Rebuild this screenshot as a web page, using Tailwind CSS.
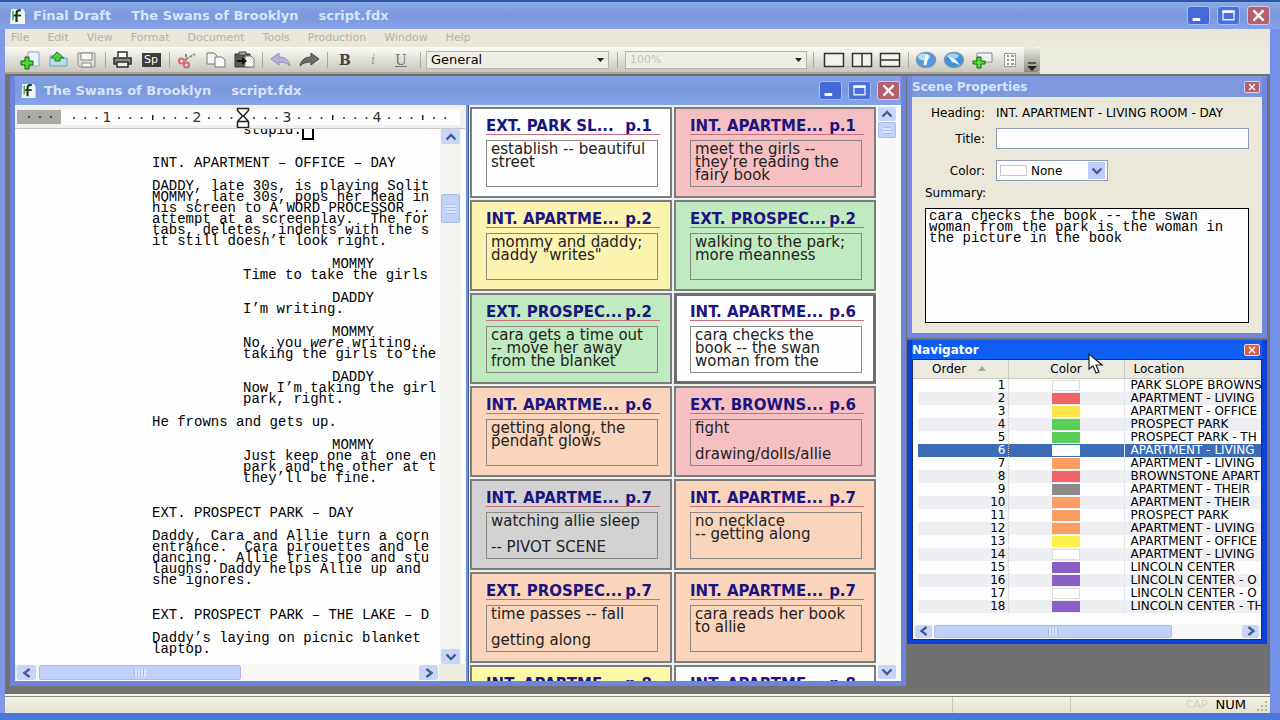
<!DOCTYPE html>
<html lang="en">
<head>
<meta charset="utf-8">
<title>Final Draft - The Swans of Brooklyn - script.fdx</title>
<script src="https://cdn.jsdelivr.net/npm/@tailwindcss/browser@4"></script>
</head>
<body class="bg-[#1f4fb0] font-['DejaVu_Sans','Liberation_Sans',sans-serif] text-black">
<svg class="hidden">
  <symbol id="up" viewBox="0 0 12 8"><path d="M1.5 6.5 6 2l4.500 4.500" fill="none" stroke="#465a8c" stroke-width="2.400"/></symbol>
  <symbol id="down" viewBox="0 0 12 8"><path d="M1.500 1.500 6 6l4.500-4.500" fill="none" stroke="#465a8c" stroke-width="2.400"/></symbol>
  <symbol id="left" viewBox="0 0 12 10"><path d="M8.500 1 3.500 5l5 4" fill="none" stroke="#465a8c" stroke-width="2.400"/></symbol>
  <symbol id="right" viewBox="0 0 12 10"><path d="M3.500 1l5 4-5 4" fill="none" stroke="#465a8c" stroke-width="2.400"/></symbol>
  <symbol id="logo" viewBox="0 0 18 18"><path d="M3 2h12l2 3v12H2z" fill="#eef6f2"/><path d="M13 3.500c-4-1-4.500 1-4.500 4V15" fill="none" stroke="#16331c" stroke-width="2.200"/><path d="M5 8.500h8" stroke="#16331c" stroke-width="1.800"/><path d="M5 4v9" stroke="#4aa35a" stroke-width="1.500"/></symbol>
  <symbol id="min" viewBox="0 0 22 20"><path d="M4 13h9v3.500H4z" fill="#fff"/></symbol>
  <symbol id="max" viewBox="0 0 22 20"><path d="M4.500 5h13v10h-13z" fill="none" stroke="#dcebff" stroke-width="1.600"/><path d="M4 4h14v3H4z" fill="#fff"/></symbol>
  <symbol id="close" viewBox="0 0 22 20"><path d="M5 4l12 12M17 4 5 16" stroke="#fff" stroke-width="2.600"/></symbol>
</svg>

<div class="flex min-h-screen w-full flex-col border-t-2 border-[#2a55a5] bg-linear-to-r from-[#8097e4] from-50% to-[#7590e8]">
  <header class="flex h-[27px] items-center bg-linear-to-b from-[#8aa9e6] via-[#7b98db] to-[#86a2ea] pr-[10px] pl-[7px]">
    <svg class="h-[18px] w-[20px]"><use href="#logo"/></svg>
    <h1 class="flex flex-1 gap-[20px] pl-[6px] text-[13px] font-bold whitespace-pre text-[#d5e5ff]"><span>Final Draft</span><span>The Swans of Brooklyn</span><span>script.fdx</span></h1>
    <div class="flex gap-[7px]">
      <button aria-label="Minimize" class="h-[19px] w-[23px] rounded-[3px] border border-[#a4bdf4] bg-[#4469d8]"><svg class="h-full w-full"><use href="#min"/></svg></button>
      <button aria-label="Restore" class="h-[19px] w-[23px] rounded-[3px] border border-[#a4bdf4] bg-[#4a70dc]"><svg class="h-full w-full"><use href="#max"/></svg></button>
      <button aria-label="Close" class="h-[19px] w-[23px] rounded-[3px] border border-[#d5c6e6] bg-[#b5606e]"><svg class="h-full w-full"><use href="#close"/></svg></button>
    </div>
  </header>

  <div class="ml-[5px] mr-[10px] flex flex-1 flex-col bg-[#ece9d8]">
    <nav class="flex h-[18px] items-center gap-[18px] bg-[#e9e6da] pl-[6px] text-[11px] text-[#b5b1a5]">
      <button>File</button><button>Edit</button><button>View</button><button>Format</button><button>Document</button><button>Tools</button><button>Production</button><button>Window</button><button>Help</button>
    </nav>

    <div class="flex h-[27px] bg-[#ecebdf]">
      <div class="flex items-center border-b-2 border-[#a8a696] bg-linear-to-b from-[#fbfbf5] to-[#c9c7bb] pl-[12px]">
        <button aria-label="New" class="flex w-7 justify-center"><svg width="22" height="20"><path d="M8 2h11v14H8z" fill="#e8f2fd" stroke="#8fa6c0"/><path d="M5 7h4v4h4v4H9v4H5v-4H1v-4h4z" fill="#4ade2e" stroke="#176112"/></svg></button>
        <button aria-label="Open" class="flex w-7 justify-center"><svg width="22" height="20"><path d="M2 6h6l2 2h9v8H2z" fill="#b5dcef" stroke="#7ba0ae"/><path d="M9 2l7 6h-4v3H7V8H3z" fill="#4cd23a" stroke="#267a20"/></svg></button>
        <button aria-label="Save" class="flex w-7 justify-center"><svg width="22" height="20"><path d="M2 3h17v14H4l-2-2z" fill="#deddd8" stroke="#909090"/><path d="M5 3h11v7H5zM6 13h9v4H6z" fill="#f8f8f8" stroke="#888"/></svg></button>
        <span class="flex w-2 justify-center"><i class="h-4 w-px bg-[#aaa89b]"></i></span>
        <button aria-label="Print" class="flex w-7 justify-center"><svg width="22" height="20"><path d="M6 7V2h9v5" fill="#fff" stroke="#333" stroke-width="1.500"/><path d="M2 8h17v6H2z" fill="#8c8c8c" stroke="#2b2b2b" stroke-width="1.500"/><path d="M5 12h11v5H5z" fill="#eee" stroke="#2b2b2b" stroke-width="1.500"/></svg></button>
        <button aria-label="Spelling" class="flex w-7 justify-center"><span class="flex h-[14px] w-[19px] items-center justify-center bg-[#3d3d3d] text-[11px] leading-none text-white">Sp</span></button>
        <span class="flex w-[9px] justify-center"><i class="h-4 w-px bg-[#aaa89b]"></i></span>
        <button aria-label="Cut" class="flex w-7 justify-center"><svg width="22" height="20"><path d="M9 9l9-5M9 11V3" stroke="#8a8f94" stroke-width="2" stroke-dasharray="3 1"/><circle cx="4.500" cy="11" r="2.600" fill="none" stroke="#d86a70" stroke-width="2"/><circle cx="9.500" cy="15" r="2.600" fill="none" stroke="#d86a70" stroke-width="2"/></svg></button>
        <button aria-label="Copy" class="flex w-7 justify-center"><svg width="22" height="20"><path d="M2 3h7l3 3v8H2z" fill="#f4f4f4" stroke="#777"/><path d="M10 7h7l3 3v7H10z" fill="#f9f9f9" stroke="#777"/></svg></button>
        <button aria-label="Paste" class="flex w-7 justify-center"><svg width="22" height="20"><path d="M2 4h15v13H2z" fill="#5b5b5b" stroke="#333"/><path d="M6 2h7v3H6z" fill="#aaa" stroke="#444"/><path d="M12 6h6l3 3v8h-9z" fill="#f2f2f2" stroke="#777"/><path d="M4 10h5V7l5 4-5 4v-3H4z" fill="#111"/></svg></button>
        <span class="flex w-[9px] justify-center"><i class="h-4 w-px bg-[#aaa89b]"></i></span>
        <button aria-label="Undo" class="flex w-7 justify-center"><svg width="22" height="20"><path d="M1 9l8-6v4c7 0 10 4 11 9-3-3-6-4-11-4v3z" fill="#b9b0dc" stroke="#9086bb"/></svg></button>
        <button aria-label="Redo" class="flex w-7 justify-center"><svg width="22" height="20"><path d="M21 9l-8-6v4C6 7 3 11 2 16c3-3 6-4 11-4v3z" fill="#6c6c6c" stroke="#4a4a4a"/></svg></button>
        <span class="flex w-2 justify-center"><i class="h-4 w-px bg-[#aaa89b]"></i></span>
        <button class="w-7 font-['DejaVu_Serif',serif] text-[14px] leading-5 font-bold text-[#444]">B</button>
        <button class="w-7 font-['DejaVu_Serif',serif] text-[13px] leading-5 italic text-[#999]">i</button>
        <button class="w-7 font-['DejaVu_Serif',serif] text-[14px] leading-5 underline text-[#777]">U</button>
        <span class="flex w-[11px] justify-center"><i class="h-4 w-px bg-[#aaa89b]"></i></span>
        <label class="relative block w-[183px]"><select aria-label="Element" class="block h-[18px] w-full appearance-none border border-[#b8b6aa] bg-[#efeee6] pl-1 text-[13px] leading-4"><option>General</option></select><svg class="pointer-events-none absolute top-[7px] right-[5px]" width="7" height="4"><path d="M0 0h7L3.500 4z" fill="#222"/></svg></label>
        <span class="flex w-4 justify-center"><i class="h-4 w-px bg-[#aaa89b]"></i></span>
        <label class="relative block w-[182px]"><select aria-label="Zoom" class="block h-[18px] w-full appearance-none border border-[#b8b6aa] bg-[#efeee6] pl-1 text-[11px] leading-4 text-[#c2c0b4]"><option>100%</option></select><svg class="pointer-events-none absolute top-[7px] right-[5px]" width="7" height="4"><path d="M0 0h7L3.500 4z" fill="#222"/></svg></label>
        <span class="flex w-[13px] justify-center"><i class="h-4 w-px bg-[#aaa89b]"></i></span>
        <button aria-label="Single view" class="flex w-7 justify-center"><svg width="22" height="20"><path d="M1.500 3.500h19v13h-19z" fill="#f3f3ee" stroke="#333" stroke-width="1.500"/></svg></button>
        <button aria-label="Split vertically" class="flex w-7 justify-center"><svg width="22" height="20"><path d="M1.500 3.500h19v13h-19zM11 3v14" fill="#f3f3ee" stroke="#333" stroke-width="1.500"/></svg></button>
        <button aria-label="Split horizontally" class="flex w-7 justify-center"><svg width="22" height="20"><path d="M1.500 3.500h19v13h-19zM1 10h20" fill="#f3f3ee" stroke="#333" stroke-width="1.500"/></svg></button>
        <span class="flex w-2 justify-center"><i class="h-4 w-px bg-[#aaa89b]"></i></span>
        <button aria-label="Scene properties" class="flex w-7 justify-center"><svg width="22" height="20"><ellipse cx="11" cy="10" rx="9.500" ry="7.500" fill="#4e9be0" stroke="#7e97b0" stroke-width="1.500"/><ellipse cx="9" cy="7" rx="6" ry="3.500" fill="#b6dcf9"/><path d="M12 5l-2 10" stroke="#fff" stroke-width="3"/></svg></button>
        <button aria-label="Navigator" class="flex w-7 justify-center"><svg width="22" height="20"><ellipse cx="11" cy="10" rx="9.500" ry="7.500" fill="#3f8fdc" stroke="#7e97b0" stroke-width="1.500"/><ellipse cx="10" cy="6" rx="6" ry="2.500" fill="#9fd0f6"/><path d="M5 6l7 3 5 6-8-3z" fill="#eef7ff"/></svg></button>
        <button aria-label="Add note" class="flex w-7 justify-center"><svg width="22" height="20"><path d="M6 3h15v9H6z" fill="#eee" stroke="#8b8b8b"/><path d="M6 7h4v4h4v3h-4v4H6v-4H2v-3h4z" fill="#55df38" stroke="#176112"/></svg></button>
        <button aria-label="Notes" class="flex w-7 justify-center"><svg width="22" height="20"><path d="M5.500 3.500h11v13h-11z" fill="#f6f6f2" stroke="#999"/><path d="M8 6h2m2 0h3M8 10h2m2 0h3M8 14h2m2 0h3" stroke="#777" stroke-width="1.500"/></svg></button>
        <button aria-label="Toolbar options" class="flex h-[25px] w-4 items-end justify-center rounded-r bg-linear-to-b from-[#ececE6] to-[#8d8b80]"><svg width="12" height="10"><path d="M2 1h8" stroke="#333" stroke-width="1.500"/><path d="M1 4h10L6 9z" fill="#222"/></svg></button>
      </div>
    </div>

    <main class="flex flex-1 items-start border-b-2 border-[#f4f2e8] bg-[#717171] pt-[2px] pl-[5px]">
      <section class="mb-[8px] flex h-[610px] min-w-0 flex-1 flex-col bg-[#6d84dc] px-[5px] pb-[5px]">
        <div class="flex h-[29px] shrink-0 items-center bg-linear-to-b from-[#82a0e4] via-[#7a98dc] to-[#85a4ec] pr-[1px] pl-[4px]">
          <svg class="h-[17px] w-[18px]"><use href="#logo"/></svg>
          <h2 class="flex flex-1 gap-[20px] pl-[7px] text-[13px] font-bold text-[#d5e5ff]"><span>The Swans of Brooklyn</span><span>script.fdx</span></h2>
          <div class="flex gap-[6px]">
            <button aria-label="Minimize document" class="h-[19px] w-[23px] rounded-[3px] border border-[#a4bdf4] bg-[#4469d8]"><svg class="h-full w-full"><use href="#min"/></svg></button>
            <button aria-label="Maximize document" class="h-[19px] w-[23px] rounded-[3px] border border-[#a4bdf4] bg-[#4a70dc]"><svg class="h-full w-full"><use href="#max"/></svg></button>
            <button aria-label="Close document" class="h-[19px] w-[23px] rounded-[3px] border border-[#d5c6e6] bg-[#b5606e]"><svg class="h-full w-full"><use href="#close"/></svg></button>
          </div>
        </div>

        <div class="flex min-h-0 flex-1 bg-[#fdfdfb]">
          <div class="flex w-[450px] shrink-0 flex-col bg-[#fdfdfd]">
            <div id="ruler" class="h-[24px] shrink-0 border-b border-[#c9c8c0] bg-[#f1f0ea]"></div>
            <div class="flex min-h-0 flex-1">
              <article class="min-w-0 flex-1 overflow-hidden font-['Liberation_Mono','Courier_New',monospace] text-[14px] leading-[11px] [&>*]:whitespace-pre">
                <p class="-mt-[4px] pl-[228px]">stupid.<span class="border-2 border-t-0 border-black">'</span></p>
                <h3 class="mt-[22px] pl-[137px]">INT. APARTMENT – OFFICE – DAY</h3>
                <p class="mt-3 pl-[137px]">DADDY, late 30s, is playing Solit
MOMMY, late 30s, pops her head in
his screen to A WORD PROCESSOR ..
attempt at a screenplay.  The for
tabs, deletes, indents with the s
it still doesn’t look right.</p>
                <p class="mt-3 pl-[317px]">MOMMY</p>
                <p class="pl-[228px]">Time to take the girls</p>
                <p class="mt-3 pl-[317px]">DADDY</p>
                <p class="pl-[228px]">I’m writing.</p>
                <p class="mt-3 pl-[317px]">MOMMY</p>
                <p class="pl-[228px]">No, you <em>were</em> writing..
taking the girls to the</p>
                <p class="mt-3 pl-[317px]">DADDY</p>
                <p class="pl-[228px]">Now I’m taking the girl
park, right.</p>
                <p class="mt-3 pl-[137px]">He frowns and gets up.</p>
                <p class="mt-3 pl-[317px]">MOMMY</p>
                <p class="pl-[228px]">Just keep one at one en
park and the other at t
they’ll be fine.</p>
                <h3 class="mt-6 pl-[137px]">EXT. PROSPECT PARK – DAY</h3>
                <p class="mt-3 pl-[137px]">Daddy, Cara and Allie turn a corn
entrance.  Cara pirouettes and le
dancing.  Allie tries too and stu
laughs. Daddy helps Allie up and
she ignores.</p>
                <h3 class="mt-6 pl-[137px]">EXT. PROSPECT PARK – THE LAKE – D</h3>
                <p class="mt-3 pl-[137px]">Daddy’s laying on picnic blanket
laptop.</p>
              </article>
              <div class="mr-[4px] flex w-[21px] flex-col items-center bg-[#f4f4f1]">
                <button aria-label="Scroll up" class="flex h-[15px] w-[19px] items-center justify-center rounded-[2px] bg-[#c6d5f8]"><svg width="12" height="8"><use href="#up"/></svg></button>
                <div class="mt-[50px] flex h-[29px] w-[19px] items-center justify-center rounded-[2px] border border-[#a9bdec] bg-[#c2d3fb]"><i class="h-[10px] w-[10px] bg-[repeating-linear-gradient(#a9bff2_0_1px,#dbe6ff_1px_3px)]"></i></div>
                <button aria-label="Scroll down" class="mt-auto flex h-[15px] w-[19px] items-center justify-center rounded-[2px] bg-[#c6d5f8]"><svg width="12" height="8"><use href="#down"/></svg></button>
              </div>
            </div>
            <div class="flex h-[17px] shrink-0 items-center bg-[#ecebe0] pl-[2px]">
              <div class="flex h-full w-[422px] items-center bg-[#f8f8f6]">
                <button aria-label="Scroll left" class="flex h-[15px] w-[19px] items-center justify-center rounded-[2px] bg-[#c6d5f8]"><svg width="12" height="10"><use href="#left"/></svg></button>
                <div class="ml-[3px] flex h-[15px] w-[202px] items-center justify-center rounded-[2px] border border-[#a9bdec] bg-[#bfd1fa]"><i class="h-[8px] w-[12px] bg-[repeating-linear-gradient(90deg,#a3baf0_0_1px,#dbe6ff_1px_3px)]"></i></div>
                <button aria-label="Scroll right" class="mr-[1px] ml-auto flex h-[15px] w-[19px] items-center justify-center rounded-[2px] bg-[#c6d5f8]"><svg width="12" height="10"><use href="#right"/></svg></button>
              </div>
            </div>
          </div>

          <div class="w-[4px] shrink-0 border-x border-l-[#f0f0e8] border-r-[#3f5f9a] bg-[#6f95cf]"></div>

          <div id="cards" class="grid min-w-0 flex-1 auto-rows-[91px] grid-cols-2 gap-[2px] overflow-hidden bg-[#eef1f2] pt-[2px] pl-[1px]"></div>
          <div class="ml-[2px] flex w-[23px] shrink-0 flex-col items-start bg-[#f8f8f6] pt-[2px] pr-[4px]">
            <button aria-label="Scroll cards up" class="flex h-[14px] w-[18px] items-center justify-center rounded-[2px] bg-[#c6d5f8]"><svg width="12" height="8"><use href="#up"/></svg></button>
            <div class="mt-[1px] flex h-[16px] w-[18px] items-center justify-center rounded-[2px] border border-[#a9bdec] bg-[#c2d3fb]"><i class="h-[7px] w-[8px] bg-[repeating-linear-gradient(#a9bff2_0_1px,#dbe6ff_1px_3px)]"></i></div>
            <button aria-label="Scroll cards down" class="mt-auto mb-[2px] flex h-[14px] w-[18px] items-center justify-center rounded-[2px] bg-[#c6d5f8]"><svg width="12" height="8"><use href="#down"/></svg></button>
          </div>
        </div>
      </section>

      <aside class="mr-[3px] ml-[1px] flex w-[360px] shrink-0 flex-col gap-[2px]">
        <section class="flex h-[262px] flex-col bg-[#7288e0] px-[5px] pb-[5px]">
          <div class="flex h-[21px] items-center justify-between bg-[#7c98de] pr-[2px]">
            <h2 class="text-[12px] leading-4 font-bold text-[#d5e5ff]">Scene Properties</h2>
            <button aria-label="Close scene properties" class="h-[12px] w-[16px] rounded-[2px] border border-[#e0cfe6] bg-[#b5606e]"><svg viewBox="0 0 22 20" class="h-full w-full"><use href="#close"/></svg></button>
          </div>
          <form class="flex flex-1 flex-col bg-[#ebe8da] px-[13px] pt-[8px] text-[12px]">
            <div class="grid grid-cols-[60px_1fr] items-center gap-x-[11px]">
              <span class="text-right leading-4">Heading:</span><output class="leading-4 whitespace-nowrap">INT. APARTMENT - LIVING ROOM - DAY</output>
              <label for="title" class="mt-[7px] text-right leading-4">Title:</label><input id="title" class="mt-[7px] h-[21px] w-full border border-[#8f9db0] bg-[#fdfdfd] px-1">
              <label for="color" class="mt-[11px] text-right leading-4">Color:</label>
              <div class="relative mt-[11px] w-[112px]">
                <select id="color" class="block h-[21px] w-full appearance-none border border-[#8f9db0] bg-[#fdfdfd] pl-[34px] text-[12px] leading-4"><option>None</option></select>
                <i class="absolute top-[5px] left-[4px] h-[11px] w-[27px] border border-[#c9c9c4] bg-white"></i>
                <i class="pointer-events-none absolute top-[2px] right-[3px] flex h-[17px] w-[17px] items-center justify-center bg-[#bccdf8]"><svg width="12" height="8"><use href="#down"/></svg></i>
              </div>
            </div>
            <label for="summary" class="mt-[4px] w-[60px] text-right leading-4">Summary:</label>
            <textarea id="summary" class="mt-[7px] block h-[115px] w-[324px] resize-none overflow-hidden border border-black bg-[#fefefe] px-[3px] pt-[2px] font-['Liberation_Mono','Courier_New',monospace] text-[14px] leading-[11px]">cara checks the book -- the swan
woman from the park is the woman in
the picture in the book</textarea>
          </form>
        </section>

        <section class="flex h-[304px] flex-col bg-[#0b3fd6] px-[5px] pb-[4px]">
          <div class="flex h-[19px] shrink-0 items-center justify-between bg-linear-to-b from-[#1259ee] to-[#0a62fa] pr-[2px]">
            <h2 class="text-[12px] leading-4 font-bold text-white">Navigator</h2>
            <button aria-label="Close navigator" class="h-[12px] w-[16px] rounded-[2px] border border-[#f6d9cf] bg-[#d9604e]"><svg viewBox="0 0 22 20" class="h-full w-full"><use href="#close"/></svg></button>
          </div>
          <div class="flex min-h-0 flex-1 flex-col overflow-hidden border border-[#1a2f6a] bg-[#fdfdfd]">
            <table class="w-full table-fixed border-collapse text-[12px]">
              <colgroup><col class="w-[5px]"><col class="w-[90px]"><col class="w-[116px]"><col></colgroup>
              <thead class="border-b border-[#cfccbd] bg-[#ebeae0]">
                <tr class="h-[18px] leading-4"><th class="p-0"></th><th class="border-r border-[#cfccbd] p-0 pl-[14px] text-left font-normal"><span class="flex items-center gap-3">Order<svg width="8" height="5"><path d="M4 0l4 5H0z" fill="#aca899"/></svg></span></th><th class="border-r border-[#cfccbd] p-0 font-normal">Color</th><th class="p-0 pl-[9px] text-left font-normal">Location</th></tr>
              </thead>
              <tbody id="scenes"></tbody>
            </table>
            <div class="mt-auto mb-[1px] flex h-[14px] items-center bg-[#f6f6f4] px-[2px]">
              <button aria-label="Scroll list left" class="flex h-[13px] w-[17px] items-center justify-center rounded-[2px] bg-[#c6d5f8]"><svg width="12" height="10"><use href="#left"/></svg></button>
              <div class="ml-[2px] flex h-[13px] w-[238px] items-center justify-center rounded-[2px] border border-[#a9bdec] bg-[#bfd1fa]"><i class="h-[7px] w-[10px] bg-[repeating-linear-gradient(90deg,#a3baf0_0_1px,#dbe6ff_1px_3px)]"></i></div>
              <button aria-label="Scroll list right" class="ml-auto flex h-[13px] w-[17px] items-center justify-center rounded-[2px] bg-[#c6d5f8]"><svg width="12" height="10"><use href="#right"/></svg></button>
            </div>
          </div>
        </section>
      </aside>
    </main>

    <footer class="flex h-[17px] items-center border-t border-[#8f8e86] bg-linear-to-b from-[#f3f1e2] to-[#e4e1cf] text-[13px]">
      <i class="ml-auto h-4 w-px bg-[#c9c6b6]"></i><i class="ml-[117px] h-4 w-px bg-[#c9c6b6]"></i>
      <span class="ml-[115px] text-[11px] leading-4 text-[#d3d0c1]">CAP</span>
      <span class="ml-[8px] leading-4">NUM</span>
      <svg class="ml-[10px]" width="14" height="12"><path d="M9 2h2v2H9zM9 6h2v2H9zM5 6h2v2H5zM9 10h2v2H9zM5 10h2v2H5zM1 10h2v2H1z" fill="#b9b6a5"/></svg>
    </footer>
  </div>
  <div class="h-[7px] bg-[#4878dc]"></div>
</div>

<svg class="pointer-events-none absolute top-[353px] left-[1088px]" width="16" height="22"><path d="M1 1v15l4-3 3 7 3-1-3-7h6z" fill="#fff" stroke="#222" stroke-width="1.200"/></svg>

<script>
const cards = [
  ["bg-[#fefefe]", "EXT. PARK SL...", "p.1", "establish -- beautiful\nstreet"],
  ["bg-[#f6c0c2]", "INT. APARTME...", "p.1", "meet the girls --\nthey're reading the\nfairy book"],
  ["bg-[#fbf3b0]", "INT. APARTME...", "p.2", "mommy and daddy;\ndaddy \"writes\""],
  ["bg-[#c0eac0]", "EXT. PROSPEC...", "p.2", "walking to the park;\nmore meanness"],
  ["bg-[#c0eac0]", "EXT. PROSPEC...", "p.2", "cara gets a time out\n-- move her away\nfrom the blanket"],
  ["bg-[#fefefe]", "INT. APARTME...", "p.6", "cara checks the\nbook -- the swan\nwoman from the", true],
  ["bg-[#fbd5bb]", "INT. APARTME...", "p.6", "getting along, the\npendant glows"],
  ["bg-[#f6c0c2]", "EXT. BROWNS...", "p.6", "fight\n\ndrawing/dolls/allie"],
  ["bg-[#d2d2d2]", "INT. APARTME...", "p.7", "watching allie sleep\n\n-- PIVOT SCENE"],
  ["bg-[#fbd5bb]", "INT. APARTME...", "p.7", "no necklace\n-- getting along"],
  ["bg-[#fbd5bb]", "EXT. PROSPEC...", "p.7", "time passes -- fall\n\ngetting along"],
  ["bg-[#fbd5bb]", "INT. APARTME...", "p.7", "cara reads her book\nto allie"],
  ["bg-[#fcf8a8]", "INT. APARTME...", "p.8", ""],
  ["bg-[#fefefe]", "INT. APARTME...", "p.8", ""],
];
document.getElementById("cards").innerHTML = cards.map(([bg, head, page, text, sel]) => `
  <div class="${bg} ${sel ? "outline-3 -outline-offset-3 outline-[#6e6e6e]" : "outline-2 -outline-offset-2 outline-[#7c7c7c]"} pt-[11px] pr-[14px] pl-[16px]">
    <div class="-mr-[2px] flex h-[17px] justify-between border-b border-[#c8707c] pr-[8px] text-[15px] leading-4 font-bold whitespace-nowrap text-[#1c1480]"><span>${head}</span><span>${page}</span></div>
    <p class="mt-[5px] h-[47px] border border-[#8c8886] pt-[2px] pl-[4px] text-[15px] leading-[13px] whitespace-pre text-[#222]">${text}</p>
  </div>`).join("");

const scenes = [
  ["bg-white border border-[#ddd]", "PARK SLOPE BROWNS"], ["bg-[#f06468]", "APARTMENT - LIVING"], ["bg-[#fde74a]", "APARTMENT - OFFICE"],
  ["bg-[#58d058]", "PROSPECT PARK"], ["bg-[#58d058]", "PROSPECT PARK - TH"], ["bg-white", "APARTMENT - LIVING"],
  ["bg-[#fb9c62]", "APARTMENT - LIVING"], ["bg-[#f06468]", "BROWNSTONE APART"], ["bg-[#8a8a8a]", "APARTMENT - THEIR"],
  ["bg-[#fb9c62]", "APARTMENT - THEIR"], ["bg-[#fb9c62]", "PROSPECT PARK"], ["bg-[#fb9c62]", "APARTMENT - LIVING"],
  ["bg-[#fdf04a]", "APARTMENT - OFFICE"], ["bg-white border border-[#ddd]", "APARTMENT - LIVING"], ["bg-[#8a60c8]", "LINCOLN CENTER"],
  ["bg-[#8a60c8]", "LINCOLN CENTER - O"], ["bg-white border border-[#ddd]", "LINCOLN CENTER - O"], ["bg-[#8a60c8]", "LINCOLN CENTER - TH"],
];
document.getElementById("scenes").innerHTML = scenes.map(([c, loc], i) => {
  const row = i === 5 ? "bg-[#3d6cb6] text-white" : i % 2 ? "bg-[#edeff3]" : "bg-[#fdfdfd]";
  return `<tr class="h-[13px] ${row} leading-[13px]"><td class="bg-[#fdfdfd] p-0"></td><td class="border-r border-dotted border-[#ccc] p-0 pr-[2px] text-right">${i + 1}</td><td class="border-r border-[#e4e6ec] p-0"><i class="mx-auto block h-[11px] w-[28px] ${c}"></i></td><td class="overflow-hidden p-0 pl-[6px] whitespace-nowrap">${loc}</td></tr>`;
}).join("");

// Ruler: inch numbers, half-inch ticks and dots between them
let marks = "";
for (let n = 1; n <= 4; n++) marks += `<text x="${n * 90 + 2}" y="17" text-anchor="middle">${n}</text>`;
for (let i = 0; i < 34; i++) {
  const x = 59 + i * 11.25;
  if (i % 8 === 3) continue;
  marks += i % 8 === 7 ? `<path d="M${x} 10v5" stroke="#222" stroke-width="1.500"/>` : `<circle cx="${x}" cy="13" r="1"/>`;
}
document.getElementById("ruler").innerHTML = `<svg width="450" height="23" font-size="14" fill="#333">
  <rect x="46" y="4" width="399" height="16" fill="#fdfdfd"/><rect x="2" y="5" width="44" height="14" fill="#ababa6"/>
  <circle cx="14" cy="12" r="1"/><circle cx="25" cy="12" r="1"/><circle cx="36" cy="12" r="1"/>${marks}
  <path d="M222.500 3.500h11v2l-5 5.500 5 5.500v6h-11v-6l5-5.500-5-5.500zM222.500 16.500h11" fill="#fff" stroke="#222" stroke-width="1.500"/></svg>`;
</script>
</body>
</html>
